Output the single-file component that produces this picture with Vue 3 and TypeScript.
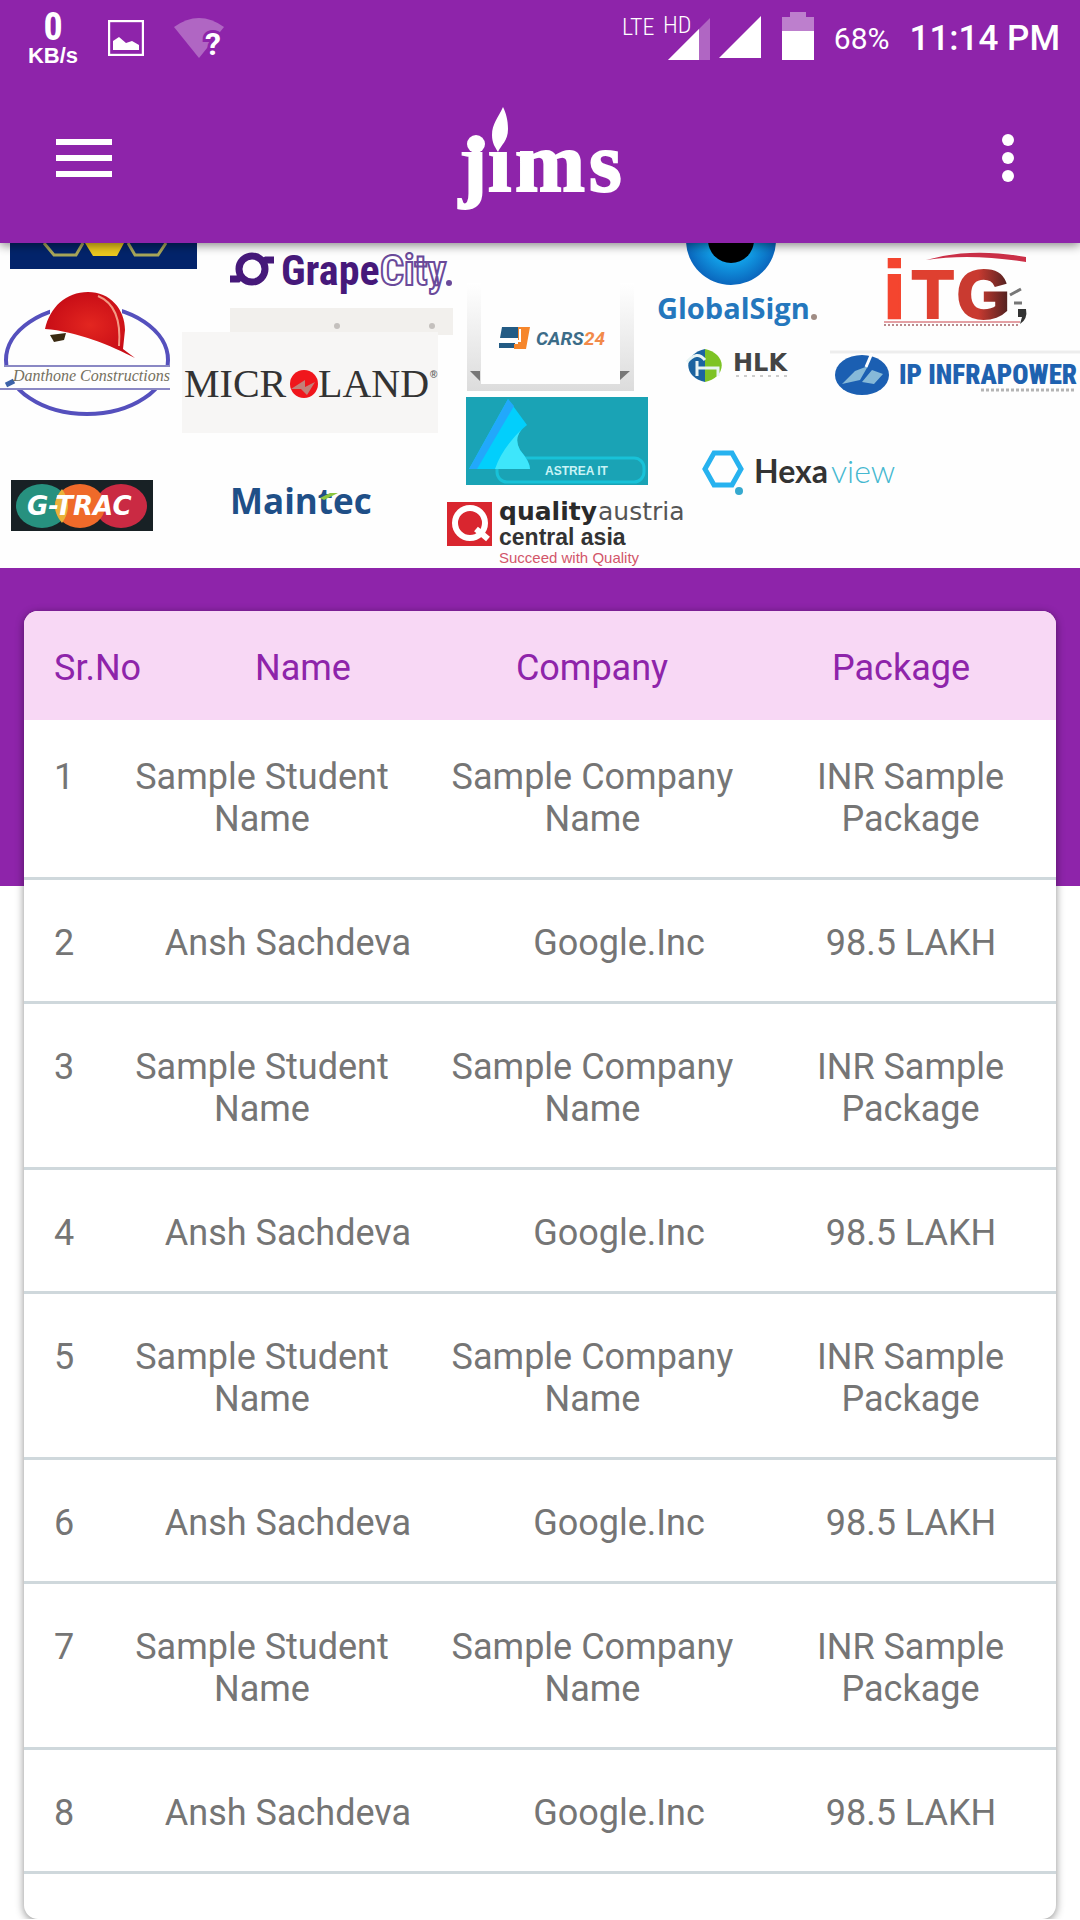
<script setup lang="ts">
interface Placement {
  id: number
  name: string
  company: string
  pay: string
  tall: boolean
}

const placements: Placement[] = Array.from({ length: 8 }, (_, i) =>
  i % 2 === 0
    ? { id: i + 1, name: 'Sample Student Name', company: 'Sample Company Name', pay: 'INR Sample Package', tall: true }
    : { id: i + 1, name: 'Ansh Sachdeva', company: 'Google.Inc', pay: '98.5 LAKH', tall: false },
)
</script>

<template>
  <div class="screen">
    <header class="top">
      <div class="status">
        <div class="status-side">
          <div class="net"><span class="net-value">0</span><span class="net-unit">KB/s</span></div>
          <svg width="36" height="36" viewBox="0 0 36 36" aria-hidden="true">
            <rect x="1" y="1" width="34" height="34" fill="none" stroke="#fff" stroke-width="2.4" />
            <path d="M5 30V21l6-4 7 6 6-2 7 4v5z" fill="#fff" />
          </svg>
          <svg width="50" height="52" viewBox="0 -6 50 52" aria-hidden="true">
            <path d="M0 9Q25 -9 50 9L25 40Z" fill="#fff" fill-opacity=".3" />
            <text x="31" y="37" class="wifi-q">?</text>
          </svg>
        </div>
        <div class="status-side right">
          <svg width="142" height="48" viewBox="0 0 142 48" aria-hidden="true">
            <text x="2" y="23" class="net-type">LTE</text>
            <text x="43" y="21" class="net-type">HD</text>
            <path d="M48 48L90 6V48Z" fill="#fff" fill-opacity=".3" />
            <path d="M48 48L79 17V48Z" fill="#fff" />
            <path d="M99 46L141 4V46Z" fill="#fff" />
          </svg>
          <svg class="battery" width="32" height="48" viewBox="0 0 32 48" aria-hidden="true">
            <path d="M0 5H8V0H24V5H32V19H0Z" fill="#fff" fill-opacity=".42" />
            <rect y="19" width="32" height="29" fill="#fff" />
          </svg>
          <span class="charge">68%</span>
          <span class="clock">11:14 PM</span>
        </div>
      </div>
      <div class="bar">
        <button class="icon-btn" type="button" aria-label="Menu">
          <svg width="56" height="38" viewBox="0 0 56 38"><path d="M0 0H56V6H0ZM0 16H56V22H0ZM0 32H56V38H0Z" fill="#fff" /></svg>
        </button>
        <svg class="logo" width="170" height="108" viewBox="0 0 170 108" role="img" aria-label="jims">
          <text x="4 33 60 134" y="87" class="logo-text">jims</text>
          <rect x="3" y="16" width="62" height="32" fill="#8e24aa" />
          <circle cx="21" cy="40" r="9" fill="#fff" />
          <path d="M48 3C43 14 37 20 37 31C37 39 40 43 43 48C46 41 53 37 53 25C53 16 51 9 48 3Z" fill="#fff" />
        </svg>
        <button class="icon-btn more" type="button" aria-label="More options">
          <svg width="12" height="48" viewBox="0 0 12 48"><circle cx="6" cy="6" r="6" fill="#fff" /><circle cx="6" cy="24" r="6" fill="#fff" /><circle cx="6" cy="42" r="6" fill="#fff" /></svg>
        </button>
      </div>
    </header>

    <svg class="banner" viewBox="0 0 1080 325" role="img" aria-label="Recruiting companies">
      <defs>
        <linearGradient id="itg" x1="0" x2="1"><stop offset=".4" stop-color="#c93a30" /><stop offset="1" stop-color="#4a2020" /></linearGradient>
        <radialGradient id="eye"><stop offset=".5" stop-color="#12a0e8" /><stop offset="1" stop-color="#0a66bd" /></radialGradient>
        <radialGradient id="helmet"><stop offset="0" stop-color="#e32620" /><stop offset="1" stop-color="#c80d16" /></radialGradient>
        <linearGradient id="wall" x1="0" x2="0" y1="0" y2="1"><stop offset="0" stop-color="#fff" /><stop offset="1" stop-color="#dcdcdc" /></linearGradient>
      </defs>
      <rect width="1080" height="325" fill="#fefefe" />

      <rect x="10" y="-4" width="187" height="30" fill="#03246b" />
      <path d="M44 0L54 12H76L83 0M128 0L135 12H158L166 0" fill="none" stroke="#a9a75a" stroke-width="3" />
      <path d="M85 0L93 13H117L124 0Z" fill="#ecc81f" />

      <ellipse cx="87" cy="117" rx="81" ry="54" fill="none" stroke="#5550bd" stroke-width="4" />
      <rect x="0" y="123" width="172" height="23" fill="#fefefe" />
      <path d="M4 123H170M0 146H170" stroke="#8a88c4" stroke-width="2" />
      <path d="M50 56H122V104H50Z" fill="#fefefe" />
      <path d="M45 86C50 64 66 49 88 49C110 49 125 66 125 87L123 106L135 115C112 103 76 88 45 86Z" fill="url(#helmet)" />
      <path d="M98 53C115 60 121 78 119 103" fill="none" stroke="#f49a84" stroke-width="2" />
      <path d="M50 92L66 90L64 97L54 99Z" fill="#3a2a12" />
      <path d="M6 142L14 138" stroke="#3c62a8" stroke-width="5" />
      <text x="13" y="138" class="t script">Danthone Constructions</text>

      <rect x="11" y="237" width="142" height="51" fill="#182125" />
      <ellipse cx="42" cy="263" rx="26" ry="22" fill="#27917f" />
      <ellipse cx="121" cy="263" rx="26" ry="22" fill="#ca2a43" />
      <ellipse cx="80" cy="263" rx="25" ry="22" fill="#ef6a2a" />
      <path d="M62 246Q74 263 62 280Q48 263 62 246" fill="#e9b23a" />
      <text x="27" y="272" class="t gtrac">G-TRAC</text>

      <circle cx="252" cy="26" r="13" fill="none" stroke="#46197a" stroke-width="7" />
      <path d="M230 36H238L243 31M261 20L266 17H274" fill="none" stroke="#46197a" stroke-width="7" />
      <text x="281" y="42" class="t grape">Grape</text>
      <text x="380" y="42" class="t grape city">City</text>
      <circle cx="449" cy="40" r="3" fill="#6a4a9a" />

      <rect x="230" y="65" width="223" height="27" fill="#f2f0ed" />
      <circle cx="337" cy="83" r="3" fill="#c4c0bd" /><circle cx="432" cy="83" r="3" fill="#c4c0bd" />
      <rect x="182" y="89" width="256" height="101" fill="#f7f6f5" />
      <text x="184" y="154" class="t micro">MICR</text>
      <circle cx="304" cy="141" r="14" fill="#f0161c" />
      <path d="M291 146L305 137V144L315 139L307 152L301 146Z" fill="#c28078" />
      <text x="318" y="154" class="t micro">LAND</text>
      <text x="430" y="135" class="t reg">®</text>

      <text x="230" y="271" class="t maintec">Maintec</text>
      <path d="M320 255L330 250H338L324 257Z" fill="#8cc63f" />

      <path d="M467 40H481V141H620V40H634V148H467Z" fill="url(#wall)" />
      <path d="M470 128H480V138ZM620 128H630L620 137Z" fill="#777" />
      <path d="M502 84H518V95H500ZM499 100H515V105H499Z" fill="#235b84" />
      <path d="M518 84H530L526 106H514V101H518V95H518Z" fill="#f6862b" />
      <path d="M502 98H520V86" fill="none" stroke="#fff" stroke-width="2" />
      <text x="536" y="102" class="t cars">CARS</text>
      <text x="584" y="102" class="t cars orange">24</text>

      <rect x="466" y="154" width="182" height="88" fill="#1aa3b5" />
      <rect x="497" y="215" width="147" height="24" rx="10" fill="none" stroke="#18c2d8" stroke-width="3" />
      <path d="M508 156L469 226H496L530 226Q530 219 520 207Q511 194 527 182Z" fill="#02cffc" />
      <path d="M508 156L469 226H477L514 163Z" fill="#22a8fb" />
      <path d="M495 226Q502 205 524 184Q513 194 520 207Q530 219 530 226Z" fill="#3ee6fb" />
      <text x="545" y="232" class="t astrea">ASTREA IT</text>

      <rect x="447" y="259" width="45" height="44" fill="#d9262f" />
      <circle cx="470" cy="280" r="15" fill="none" stroke="#fff" stroke-width="6" />
      <path d="M476 286L488 296" stroke="#fff" stroke-width="6" />
      <text x="499" y="277" class="t quality">quality</text>
      <text x="598" y="277" class="t quality thin">austria</text>
      <text x="499" y="302" class="t central">central asia</text>
      <text x="499" y="320" class="t succeed">Succeed with Quality</text>

      <circle cx="731" cy="-3" r="45" fill="url(#eye)" />
      <circle cx="731" cy="-3" r="23" fill="#000" />
      <text x="657" y="76" class="t global">GlobalSign</text>
      <circle cx="814" cy="74" r="3" fill="#a08c84" />

      <path d="M705 106A22 17 0 0 0 705 139Z" fill="#1c64a0" />
      <path d="M705 106A22 17 0 0 1 705 139Z" fill="#7dc325" />
      <path d="M687 119Q697 107 705 117M697 118V133M697 125H718V133" fill="none" stroke="#e8f4f4" stroke-width="3" />
      <text x="733" y="128" class="t hlk">HLK</text>
      <path d="M736 133H790" stroke="#ccc" stroke-width="2" stroke-dasharray="3 5" />

      <text x="883" y="75" class="t itg-i">i</text>
      <text x="912" y="75" class="t itg">T</text>
      <text x="957" y="75" class="t itg itg-g">G</text>
      <path d="M926 17Q970 4 1026 14V19Q970 10 926 17Z" fill="#cc3048" />
      <path d="M1010 52L1021 46M1014 60H1022" stroke="#777" stroke-width="3" />
      <path d="M1018 66H1026Q1028 76 1020 81L1022 74H1018Z" fill="#333" />
      <path d="M884 79H1020" stroke="#e4a0a4" stroke-width="2" />
      <path d="M884 82H1018" stroke="#b9898c" stroke-width="2" stroke-dasharray="2 2" />

      <path d="M830 109H1080" stroke="#ededed" stroke-width="3" />
      <ellipse cx="862" cy="132" rx="27" ry="20" fill="#1b5fb2" />
      <path d="M842 141L855 128L868 123L860 137ZM862 139L872 127L883 131L874 141Z" fill="#86b9d8" />
      <path d="M866 124L872 110" stroke="#fff" stroke-width="3" />
      <text x="899" y="141" class="t infra">IP INFRAPOWER</text>
      <path d="M981 147H1074" stroke="#b4b4b4" stroke-width="3" stroke-dasharray="3 2" />

      <path d="M705 226L714 210H732L741 226L732 242H714Z" fill="none" stroke="#27b2ef" stroke-width="5" />
      <circle cx="739" cy="248" r="4" fill="#36a9cf" />
      <text x="754" y="240" class="t hexa">Hexa</text>
      <text x="831" y="240" class="t hexa view">view</text>
    </svg>

    <main class="content">
      <div class="card">
        <table class="list">
          <thead>
            <tr class="row head"><th scope="col">Sr.No</th><th scope="col">Name</th><th scope="col">Company</th><th scope="col">Package</th></tr>
          </thead>
          <tbody>
            <tr v-for="p in placements" :key="p.id" class="row" :class="{ tall: p.tall }">
              <td>{{ p.id }}</td><td>{{ p.name }}</td><td>{{ p.company }}</td><td>{{ p.pay }}</td>
            </tr>
          </tbody>
        </table>
      </div>
    </main>
  </div>
</template>

<style>
body {
  margin: 0;
  background: #fff;
}
</style>

<style scoped>
.screen {
  font-family: Roboto, "Liberation Sans", sans-serif;
  overflow: hidden;
}
.top {
  position: relative;
  background: #8e24aa;
  color: #fff;
  box-shadow: 0 2px 10px rgba(0, 0, 0, 0.5);
}
.status {
  display: flex;
  justify-content: space-between;
  height: 72px;
  padding: 0 20px 0 28px;
}
.status-side {
  display: flex;
  align-items: center;
  gap: 30px;
  padding-top: 4px;
}
.status-side.right {
  gap: 20px;
  padding-top: 0;
}
.net {
  display: flex;
  flex-direction: column;
  align-items: center;
  width: 50px;
}
.net-value {
  font: bold 38px/36px "Liberation Sans Narrow", "Roboto Condensed", Roboto, sans-serif;
}
.net-unit {
  font: bold 22px/22px "Liberation Sans", sans-serif;
}
.wifi-q {
  font: 700 32px Roboto, sans-serif;
  fill: #fff;
  stroke: #8e24aa;
  stroke-width: 6px;
  paint-order: stroke;
}
.net-type {
  font: 300 24px "Liberation Sans Narrow", "Roboto Condensed", Roboto, sans-serif;
  fill: #fff;
}
.charge,
.clock {
  padding-top: 6px;
  line-height: 40px;
}
.charge {
  font-size: 30px;
}
.clock {
  font-size: 35px;
  font-weight: 500;
}
.bar {
  display: grid;
  grid-template-columns: 1fr auto 1fr;
  align-items: center;
  height: 171px;
  padding: 0 56px;
}
.icon-btn {
  display: flex;
  justify-content: center;
  width: 56px;
  padding: 0;
  border: 0;
  background: none;
}
.more {
  justify-self: end;
  margin-right: -12px;
}
.logo-text {
  font: bold 84px "Liberation Serif", serif;
  fill: #fff;
  stroke: #fff;
  stroke-width: 2px;
}
.banner {
  display: block;
  width: 100%;
}
.t {
  font-family: "Liberation Sans", sans-serif;
  font-weight: 700;
}
.script { font: italic 16px "Liberation Serif", serif; fill: #75705f; }
.gtrac { font: italic 700 26px "DejaVu Sans", sans-serif; fill: #fff; }
.grape { font: 700 42px "Liberation Sans Narrow", "Roboto Condensed", Roboto, sans-serif; fill: #46197a; }
.city { fill: #fff; stroke: #6a4a9a; stroke-width: 2px; }
.micro { font: 40px "Liberation Serif", serif; fill: #333; }
.reg { font-size: 10px; fill: #666; }
.maintec { font: 700 35px "Open Sans", sans-serif; fill: #1f4f87; }
.cars { font: italic 700 19px Roboto, sans-serif; fill: #3c6c88; }
.orange { fill: #f28a4a; }
.astrea { font-size: 12px; fill: #c9f3f6; }
.quality { font: 700 25px "DejaVu Sans", sans-serif; fill: #2a2a2a; }
.thin { font-weight: 400; fill: #555; }
.central { font-size: 23px; fill: #333; }
.succeed { font-size: 15px; font-weight: 400; fill: #d2566a; }
.global { font: 700 29px "Open Sans", sans-serif; fill: #2477bd; }
.hlk { font: 700 24px "DejaVu Sans", sans-serif; fill: #444; }
.itg-i { font-size: 82px; fill: #f4452f; stroke: #f4452f; stroke-width: 2px; }
.itg { font-size: 68px; fill: #df4030; stroke: #df4030; stroke-width: 2px; }
.itg-g { fill: url(#itg); stroke: url(#itg); stroke-width: 3px; }
.infra { font: 900 27px "Liberation Sans Narrow", "Roboto Condensed", Roboto, sans-serif; fill: #1f62b0; }
.hexa { font: 700 32px Lato, sans-serif; fill: #333; }
.view { font-weight: 300; fill: #45b8d0; }

.content {
  padding: 43px 24px 0;
  background: linear-gradient(#8e24aa, #8e24aa) top / 100% 318px no-repeat;
}
.card {
  padding-bottom: 45px;
  border-radius: 14px;
  background: #fff;
  box-shadow: 0 2px 8px rgba(0, 0, 0, 0.45);
  overflow: hidden;
}
.list,
.list thead,
.list tbody {
  display: block;
}
.row {
  display: grid;
  grid-template-columns: 80fr 368fr 294fr 290fr;
  padding: 42px 0 37px;
  border-bottom: 3px solid #cfd8dc;
  color: #757575;
  font-size: 36px;
  line-height: 42px;
  text-align: center;
}
.row.tall {
  grid-template-columns: 80fr 316fr 345fr 291fr;
}
.row.tall:first-child {
  padding-top: 36px;
}
.row.head {
  grid-template-columns: 144fr 270fr 308fr 310fr;
  padding: 36px 0 31px;
  border: 0;
  background: #f8d8f5;
  color: #8e24aa;
}
.row th,
.row td {
  min-width: 0;
  padding: 0;
  font-weight: 400;
}
.row th:first-child,
.row td:first-child {
  padding-left: 30px;
  text-align: left;
}
</style>
